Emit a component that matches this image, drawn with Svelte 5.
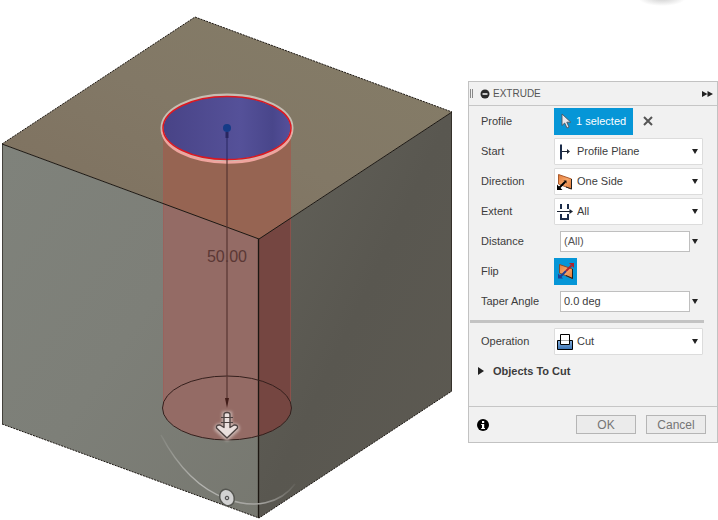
<script lang="ts">
  let start = $state('Profile Plane');
  let direction = $state('One Side');
  let extent = $state('All');
  let operation = $state('Cut');
  let distance = $state('(All)');
  let taper = $state('0.0 deg');
  let flipped = $state(true);
</script>

{#snippet caret()}
  <svg class="caret" width="6" height="5" viewBox="0 0 6 5" aria-hidden="true"><path d="M0 0h6L3 5z" fill="#222" /></svg>
{/snippet}

<main>
  <svg class="scene" viewBox="0 0 468 520" role="img" aria-label="Extrude preview">
    <defs>
      <linearGradient id="top" x1="0" y1="1" x2="1" y2="0">
        <stop offset="0" stop-color="#7e705e" />
        <stop offset="0.5" stop-color="#827866" />
        <stop offset="1" stop-color="#857d67" />
      </linearGradient>
      <linearGradient id="left" x1="0" y1="0" x2="1" y2="1">
        <stop offset="0" stop-color="#7f827b" />
        <stop offset="0.5" stop-color="#7d7f78" />
        <stop offset="1" stop-color="#777870" />
      </linearGradient>
      <linearGradient id="right" x1="0" y1="0" x2="1" y2="1">
        <stop offset="0" stop-color="#63625a" />
        <stop offset="0.5" stop-color="#595750" />
        <stop offset="1" stop-color="#5d5a52" />
      </linearGradient>
      <linearGradient id="profile" x1="0" x2="1">
        <stop offset="0" stop-color="#484386" />
        <stop offset="0.6" stop-color="#555199" />
        <stop offset="0.85" stop-color="#49468b" />
        <stop offset="1" stop-color="#56519c" />
      </linearGradient>
      <linearGradient id="arc" x1="0" x2="1">
        <stop offset="0" stop-color="#d0d0cc" stop-opacity="0.1" />
        <stop offset="0.3" stop-color="#b4b4b0" />
        <stop offset="0.75" stop-color="#a3a29e" />
        <stop offset="1" stop-color="#aaa9a5" stop-opacity="0.1" />
      </linearGradient>
      <clipPath id="top-clip"><path d="M195 17L452 112L259 239L2 144z" /></clipPath>
      <clipPath id="left-clip"><path d="M2 144L259 239V518L2 424z" /></clipPath>
      <clipPath id="right-clip"><path d="M452 112L259 239V518L452 391z" /></clipPath>
      <filter id="glow" x="-50%" y="-50%" width="200%" height="200%"><feGaussianBlur stdDeviation="1.5" /></filter>
    </defs>

    <path d="M195 17L452 112L259 239L2 144z" fill="url(#top)" />
    <path d="M2 144L259 239V518L2 424z" fill="url(#left)" />
    <path d="M452 112L259 239V518L452 391z" fill="url(#right)" />

    <path d="M163 128V408A64 32 0 0 0 291 408V128z" fill="#966452" clip-path="url(#top-clip)" />
    <path d="M163 128V408A64 32 0 0 0 291 408V128z" fill="#946b65" clip-path="url(#left-clip)" />
    <path d="M163 128V408A64 32 0 0 0 291 408V128z" fill="#754641" clip-path="url(#right-clip)" />
    <path d="M163.500 150V405M290.500 150V405" stroke="#a05c56" stroke-opacity="0.5" />

    <g fill="none" stroke="#1c1712">
      <path d="M2 144L195 17L452 112M2 424L259 518L452 391" stroke-dasharray="2 1" />
      <path d="M2 144L259 239L452 112" />
      <path d="M2.500 144V424M451.500 112V391" stroke-opacity="0.6" />
      <path d="M258.500 239V518" stroke-width="1.300" />
      <ellipse cx="227" cy="408" rx="64.500" ry="32" stroke="#35201d" />
    </g>

    <ellipse cx="227" cy="128" rx="65" ry="33" fill="url(#profile)" stroke="#c6bdb2" stroke-width="3" />
    <path d="M162.500 130A64.500 32.500 0 0 0 291.500 130" fill="none" stroke="#efa49e" stroke-width="2.500" />
    <ellipse cx="227" cy="128" rx="64" ry="31.500" fill="none" stroke="#dc1720" stroke-width="1.500" />

    <path d="M227 128V160" stroke="#292660" />
    <path d="M227 132V138" stroke="#292660" stroke-width="3" />
    <path d="M227 160V400" stroke="#573531" stroke-width="1.200" />
    <path d="M225 398h4L227 408z" fill="#421d19" />
    <circle cx="227" cy="128" r="4" fill="#153b87" />
    <text x="227" y="262" text-anchor="middle">50.00</text>

    <path d="M161 435C180 471 202 490 227 499C254 509 280 504 295 484" fill="none" stroke="url(#arc)" stroke-width="1.500" />
    <ellipse cx="227" cy="497.500" rx="7" ry="8.500" fill="#d2d2d2" stroke="#555651" stroke-width="1.500" transform="rotate(-28 227 497.500)" />
    <circle cx="227" cy="498" r="1.800" fill="#bbb" stroke="#444" />

    <path d="M224.500 414h5v15l5-3q3 0 2.500 3L227 438L217 429q0-3 3-3l4.500 3z" fill="#ddd" stroke="#d8c9c5" stroke-width="5" filter="url(#glow)" opacity="0.8" />
    <path d="M224 414.500q0-2 3-2t3 2v13l4-2.500q4-.5 3.500 3L227 438L216.500 428q-.5-3.500 3.500-3l4 2.500z" fill="#eadfdd" stroke="#4d4241" stroke-width="1.400" stroke-linejoin="round" />
    <path d="M221 417.500h12M221 422.500h12" stroke="#4d4241" />
  </svg>

  <form class="panel" onsubmit={(e) => e.preventDefault()}>
    <header>
      <span class="grip"></span>
      <button type="button" class="plain" aria-label="Collapse">
        <svg width="10" height="10" viewBox="0 0 10 10"><circle cx="5" cy="5" r="4.500" fill="#2b2b2b" /><path d="M2.500 5h5" stroke="#fff" stroke-width="1.500" /></svg>
      </button>
      <h1>EXTRUDE</h1>
      <button type="button" class="plain" aria-label="Expand">
        <svg width="11" height="6" viewBox="0 0 11 6"><path d="M0 0L5.500 3L0 6zM5.500 0L11 3L5.500 6z" fill="#222" /></svg>
      </button>
    </header>

    <div class="fields">
      <div class="row">
        <span class="label">Profile</span>
        <button type="button" class="selection">
          <svg width="11" height="16" viewBox="0 0 11 16"><path d="M1 1V12.500L3.700 10L6 15L8 14L5.800 9.200H9.800z" fill="#e8e8ec" stroke="#4d545e" stroke-width="0.900" /></svg>
          1 selected
        </button>
        <button type="button" class="plain clear" aria-label="Clear selection">
          <svg width="10" height="10" viewBox="0 0 10 10"><path d="M1 1L9 9M9 1L1 9" stroke="#555" stroke-width="2" /></svg>
        </button>
      </div>

      <div class="row">
        <label for="start">Start</label>
        <div class="select">
          <svg class="icon" width="16" height="16" viewBox="0 0 16 16"><path d="M4 0.500V15.500" stroke="#1b2c4a" stroke-width="2" /><path d="M5 7.500H12" stroke="#1b2433" /><path d="M10 5L13 7.500L10 10z" fill="#1b2433" /></svg>
          <select id="start" bind:value={start}><option>Profile Plane</option><option>Offset Plane</option></select>
          {@render caret()}
        </div>
      </div>

      <div class="row">
        <label for="direction">Direction</label>
        <div class="select">
          <svg class="icon" width="16" height="16" viewBox="0 0 16 16">
            <defs><linearGradient id="plate" x1="0" y1="0" x2="1" y2="1"><stop offset="0" stop-color="#e57b36" /><stop offset="0.5" stop-color="#f7a86d" /><stop offset="1" stop-color="#df7431" /></linearGradient></defs>
            <path d="M1.500 0.500L14.500 5V15L1.500 10z" fill="url(#plate)" stroke="#a9592c" /><path d="M14.500 5V15L9 13" fill="none" stroke="#222" />
            <path d="M2.500 13.500L8 8" stroke="#000" stroke-width="2" /><path d="M0 16V10.500L5.500 16zM6.500 6.500H9.500V9.500z" fill="#000" />
          </svg>
          <select id="direction" bind:value={direction}><option>One Side</option><option>Two Sides</option><option>Symmetric</option></select>
          {@render caret()}
        </div>
      </div>

      <div class="row">
        <label for="extent">Extent</label>
        <div class="select">
          <svg class="icon" width="16" height="16" viewBox="0 0 16 16"><path d="M4 0V5M11 0V5M4 10V15H11V10" fill="none" stroke="#1b2c4a" stroke-width="2" /><path d="M0 7.500H14" stroke="#1b2433" /><path d="M12.500 5L16 7.500L12.500 10z" fill="#1b2433" /></svg>
          <select id="extent" bind:value={extent}><option>All</option><option>Distance</option><option>To Object</option></select>
          {@render caret()}
        </div>
      </div>

      <div class="row">
        <label for="distance">Distance</label>
        <div class="value"><input id="distance" class="muted" bind:value={distance} />{@render caret()}</div>
      </div>

      <div class="row">
        <span class="label">Flip</span>
        <button type="button" class="flip" aria-label="Flip" aria-pressed={flipped} onclick={() => (flipped = !flipped)}>
          <svg width="16" height="16" viewBox="0 0 16 16">
            <path d="M1.500 1.500L14.500 6V15.500L1.500 10z" fill="url(#plate)" stroke="#8d4b28" /><path d="M14.500 6V15.500L8 12.500" fill="none" stroke="#222" />
            <path d="M8 8L13.500 2.500" stroke="#b3222b" stroke-width="2" /><path d="M11 0H16V5z" fill="#b3222b" />
            <path d="M8 8L2.500 13.500" stroke="#243d93" stroke-width="2" /><path d="M0 10.500V15.500H5z" fill="#243d93" />
          </svg>
        </button>
      </div>

      <div class="row">
        <label for="taper">Taper Angle</label>
        <div class="value"><input id="taper" bind:value={taper} />{@render caret()}</div>
      </div>

      <hr />

      <div class="row">
        <label for="operation">Operation</label>
        <div class="select">
          <svg class="icon" width="16" height="16" viewBox="0 0 16 16">
            <defs><linearGradient id="solid" x1="0" y1="0" x2="0" y2="1"><stop offset="0" stop-color="#86b0dc" /><stop offset="1" stop-color="#3c74b4" /></linearGradient></defs>
            <path d="M0.500 6.500H15.500V15.500H0.500z" fill="url(#solid)" stroke="#000" /><path d="M3.500 0.500H12.500V10.500H3.500z" fill="#fff" stroke="#000" /><path d="M4 6.500H12" stroke="#aaa" />
          </svg>
          <select id="operation" bind:value={operation}><option>Cut</option><option>Join</option><option>Intersect</option><option>New Body</option></select>
          {@render caret()}
        </div>
      </div>

      <button type="button" class="plain section">
        <svg width="6" height="8" viewBox="0 0 6 8"><path d="M0 0L6 4L0 8z" fill="#222" /></svg>
        Objects To Cut
      </button>
    </div>

    <footer>
      <button type="button" class="plain info" aria-label="Info">
        <svg width="12" height="12" viewBox="0 0 12 12"><circle cx="6" cy="6" r="6" fill="#000" /><path d="M5 2h2.200v2H5zM4.200 5h3v4H8v1H4.200V9H5V6h-.8z" fill="#fff" /></svg>
      </button>
      <button type="submit" class="action">OK</button>
      <button type="button" class="action">Cancel</button>
    </footer>
  </form>
</main>

<style>
  :global(body) {
    margin: 0;
    background: #fff;
  }

  main {
    display: flex;
    align-items: flex-start;
    min-height: 100vh;
    overflow: hidden;
    font-family: "Liberation Sans", Arial, sans-serif;
    font-size: 11px;
    color: #3c3c3c;
    background: radial-gradient(ellipse 24px 8px at 662px -2px, #ccc, #fff) no-repeat;
  }

  .scene {
    flex: 1;
    min-width: 0;
    display: block;
  }
  .scene text {
    font-size: 16px;
    fill: #5b3835;
  }

  .panel {
    box-sizing: border-box;
    flex: 0 0 250px;
    min-width: 0;
    margin-top: 81px;
    background: #f1f1f1;
    border: 1px solid #c2c2c2;
  }

  button, input, select {
    font: inherit;
    color: inherit;
  }
  svg { flex: none; }

  .plain {
    display: flex;
    align-items: center;
    padding: 0;
    border: 0;
    background: none;
  }

  header {
    display: flex;
    align-items: center;
    height: 23px;
    padding: 0 4px 0 1px;
    border-bottom: 1px solid #c6c6c6;
  }
  .grip {
    width: 1px;
    height: 9px;
    margin-right: 7px;
    border: solid #888;
    border-width: 0 1px;
  }
  h1 {
    flex: 1;
    margin: 0 0 0 3px;
    font-size: 10px;
    font-weight: 400;
    color: #555;
  }

  .row {
    display: grid;
    grid-template-columns: 73px minmax(0, 1fr);
    align-items: center;
    height: 30px;
    padding: 0 14px 0 12px;
  }
  .row:has(.selection) { grid-template-columns: 73px auto 1fr; }

  .selection {
    display: flex;
    align-items: center;
    gap: 4px;
    height: 27px;
    padding: 0 7px;
    border: 0;
    color: #fff;
    background: #0696d7;
  }
  .clear { margin-left: 10px; }

  .select {
    position: relative;
  }
  .icon {
    position: absolute;
    left: 3px;
    top: 6px;
    pointer-events: none;
  }
  select {
    box-sizing: border-box;
    display: block;
    width: 100%;
    height: 27px;
    padding: 0 20px 0 22px;
    appearance: none;
    border: 1px solid #dcdcdc;
    border-radius: 1px;
    background: #fff;
  }
  .select .caret {
    position: absolute;
    right: 5px;
    top: 11px;
    pointer-events: none;
  }

  .value {
    display: flex;
    align-items: center;
    gap: 2px;
    padding: 0 5px 0 6px;
  }
  input {
    box-sizing: border-box;
    flex: 1;
    min-width: 0;
    height: 21px;
    padding: 0 3px;
    border: 1px solid #bfbfbf;
    background: #fff;
  }
  .muted { color: #555; }

  .flip {
    display: grid;
    place-items: center;
    width: 23px;
    height: 27px;
    padding: 0;
    border: 0;
    background: #0696d7;
  }

  hr {
    height: 3px;
    margin: 4px 13px 3px 1px;
    border: 0;
    background: #c3c3c3;
  }

  .section {
    gap: 9px;
    height: 30px;
    margin-bottom: 20px;
    padding-left: 9px;
    font-weight: 700;
  }

  footer {
    display: flex;
    align-items: center;
    gap: 10px;
    height: 35px;
    padding: 0 11px 0 8px;
    border-top: 1px solid #c6c6c6;
  }
  .info { margin-right: auto; }
  .action {
    width: 60px;
    height: 19px;
    padding: 0;
    border: 1px solid #b5b5b5;
    font-size: 12px;
    color: #757575;
    background: #ebebeb;
  }
</style>
